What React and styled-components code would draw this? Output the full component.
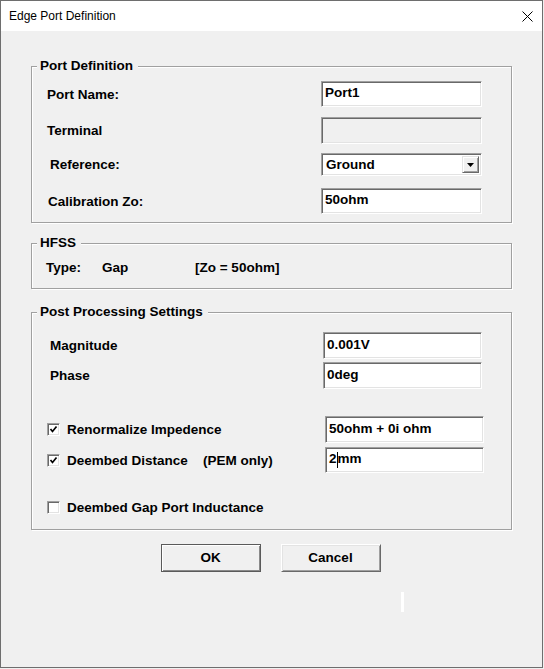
import React from 'react'
import styled, { createGlobalStyle } from 'styled-components'

const GlobalStyle = createGlobalStyle`
  html, body {
    margin: 0;
    padding: 0;
    background: #f0f0f0;
  }
  body {
    font-family: "Liberation Sans", Arial, sans-serif;
    color: #000;
  }
`

const Window = styled.div`
  position: relative;
  box-sizing: border-box;
  width: 543px;
  height: 668px;
  border: 1px solid #6e6e6e;
  background: #f0f0f0;
  display: flex;
  flex-direction: column;
`

const TitleBar = styled.div`
  flex: none;
  height: 30px;
  background: #fff;
  display: flex;
  align-items: center;
  justify-content: space-between;
  padding: 0 9px 0 8px;
  font-size: 12px;
`

const Body = styled.div`
  padding: 0 30px;
  display: flex;
  flex-direction: column;
`

const Group = styled.fieldset`
  box-sizing: border-box;
  width: 481px;
  min-width: 0;
  margin: ${p => p.$mt}px 0 0;
  padding: ${p => p.$pt}px 0 ${p => p.$pb}px;
  border: 1px solid #a0a0a0;
  box-shadow: inset 1px 1px #fff, 1px 1px #fff;
`

const Caption = styled.legend`
  margin-left: 5px;
  padding: 0 5px 0 3px;
  font-size: 13.5px;
  font-weight: bold;
  line-height: 14px;
  background: #f0f0f0;
`

const Row = styled.div`
  display: flex;
  align-items: center;
  height: ${p => p.$h}px;
  margin-top: ${p => p.$mt || 0}px;
`

const Label = styled.div`
  flex: 1;
  padding-left: ${p => p.$indent}px;
  font-size: 13.5px;
  font-weight: bold;
  white-space: nowrap;
`

const sunken = `
  box-sizing: border-box;
  border-style: solid;
  border-width: 1px;
  border-color: #a0a0a0 #fff #fff #a0a0a0;
  box-shadow: inset 1px 1px #696969, inset -1px -1px #e3e3e3;
`

const TextBox = styled.div`
  ${sunken}
  width: ${p => p.$w || 161}px;
  height: 100%;
  margin-right: ${p => p.$mr ?? 29}px;
  background: ${p => (p.$disabled ? '#f0f0f0' : '#fff')};
  padding: 0 3px 3px;
  display: flex;
  align-items: center;
  font-size: 13.5px;
  font-weight: bold;
  white-space: nowrap;
`

const Caret = styled.span`
  display: inline-block;
  width: 1px;
  height: 16px;
  margin: 0 0 -3px;
  background: #000;
`

const Combo = styled.div`
  ${sunken}
  width: 161px;
  height: 100%;
  margin-right: 29px;
  background: #fff;
  padding: 2px 2px 2px 4px;
  display: flex;
  align-items: stretch;
  font-size: 13.5px;
  font-weight: bold;
`

const ComboText = styled.div`
  flex: 1;
  display: flex;
  align-items: center;
  padding-bottom: 1px;
`

const DropButton = styled.div`
  box-sizing: border-box;
  width: 17px;
  background: #f0f0f0;
  border-style: solid;
  border-width: 1px;
  border-color: #e3e3e3 #696969 #696969 #e3e3e3;
  box-shadow: inset 1px 1px #fff, inset -1px -1px #a0a0a0;
  display: flex;
  align-items: center;
  justify-content: center;
`

const InfoRow = styled.div`
  display: grid;
  grid-template-columns: 56px 93px auto;
  align-items: center;
  height: 20px;
  padding-left: 14px;
  font-size: 13.5px;
  font-weight: bold;
`

const CheckLabel = styled.div`
  flex: 1;
  display: flex;
  align-items: center;
  gap: 7px;
  padding-left: 15px;
  font-size: 13.5px;
  font-weight: bold;
  white-space: nowrap;
`

const Box = styled.span`
  ${sunken}
  flex: none;
  width: 13px;
  height: 13px;
  background: #fff;
  display: flex;
  align-items: center;
  justify-content: center;
`

const Fixed = styled.span`
  display: inline-block;
  width: ${p => p.$w}px;
`

const Buttons = styled.div`
  display: flex;
  justify-content: center;
  gap: 20px;
  margin-top: 14px;
  padding-right: 2px;
`

const Button = styled.button`
  box-sizing: border-box;
  width: 100px;
  height: 28px;
  padding: 0 0 2px;
  background: #f0f0f0;
  font-family: "Liberation Sans", Arial, sans-serif;
  font-size: 13.5px;
  font-weight: bold;
  color: #000;
  border-style: solid;
  border-width: 1px;
  border-color: ${p => (p.$default ? '#5a5a5a' : '#fff #696969 #696969 #fff')};
  box-shadow: ${p =>
    p.$default
      ? 'inset 1px 1px #fff, inset -1px -1px #8a8a8a'
      : 'inset 1px 1px #e3e3e3, inset -1px -1px #a0a0a0'};
`

const Glitch = styled.span`
  position: absolute;
  left: 400px;
  top: 591px;
  width: 3px;
  height: 20px;
  background: #fff;
`

const CheckBox = ({ checked }) => (
  <Box>
    {checked && (
      <svg width="9" height="9" viewBox="0 0 9 9">
        <polyline points="1.5,4 3.5,6.5 7.5,1.5" fill="none" stroke="#000" strokeWidth="1.7" />
      </svg>
    )}
  </Box>
)

export default function App() {
  return (
    <>
      <GlobalStyle />
      <Window>
        <TitleBar>
          <span>Edge Port Definition</span>
          <svg width="11" height="11" viewBox="0 0 11 11">
            <path d="M0.5 0.5 L10.5 10.5 M10.5 0.5 L0.5 10.5" stroke="#000" strokeWidth="1" />
          </svg>
        </TitleBar>
        <Body>
          <Group $mt={28} $pt={8} $pb={8}>
            <Caption>Port Definition</Caption>
            <Row $h={26}>
              <Label $indent={15}>Port Name:</Label>
              <TextBox>Port1</TextBox>
            </Row>
            <Row $h={27} $mt={10}>
              <Label $indent={15}>Terminal</Label>
              <TextBox $disabled />
            </Row>
            <Row $h={23} $mt={9}>
              <Label $indent={18}>Reference:</Label>
              <Combo>
                <ComboText>Ground</ComboText>
                <DropButton>
                  <svg width="7" height="4" viewBox="0 0 7 4">
                    <path d="M0 0 H7 L3.5 4 Z" fill="#000" />
                  </svg>
                </DropButton>
              </Combo>
            </Row>
            <Row $h={26} $mt={12}>
              <Label $indent={16}>Calibration Zo:</Label>
              <TextBox>50ohm</TextBox>
            </Row>
          </Group>

          <Group $mt={13} $pt={7} $pb={11}>
            <Caption>HFSS</Caption>
            <InfoRow>
              <span>Type:</span>
              <span>Gap</span>
              <span>[Zo = 50ohm]</span>
            </InfoRow>
          </Group>

          <Group $mt={16} $pt={13} $pb={12}>
            <Caption>Post Processing Settings</Caption>
            <Row $h={27}>
              <Label $indent={18}>Magnitude</Label>
              <TextBox $w={159}>0.001V</TextBox>
            </Row>
            <Row $h={27} $mt={3}>
              <Label $indent={18}>Phase</Label>
              <TextBox $w={159}>0deg</TextBox>
            </Row>
            <Row $h={27} $mt={27}>
              <CheckLabel>
                <CheckBox checked />
                Renormalize Impedence
              </CheckLabel>
              <TextBox $w={159} $mr={27}>50ohm + 0i ohm</TextBox>
            </Row>
            <Row $h={26} $mt={4}>
              <CheckLabel>
                <CheckBox checked />
                <Fixed $w={129}>Deembed Distance</Fixed>
                (PEM only)
              </CheckLabel>
              <TextBox $w={159} $mr={27}>
                2<Caret />mm
              </TextBox>
            </Row>
            <Row $h={20} $mt={24}>
              <CheckLabel>
                <CheckBox />
                Deembed Gap Port Inductance
              </CheckLabel>
            </Row>
          </Group>

          <Buttons>
            <Button $default>OK</Button>
            <Button>Cancel</Button>
          </Buttons>
        </Body>
        <Glitch />
      </Window>
    </>
  )
}
